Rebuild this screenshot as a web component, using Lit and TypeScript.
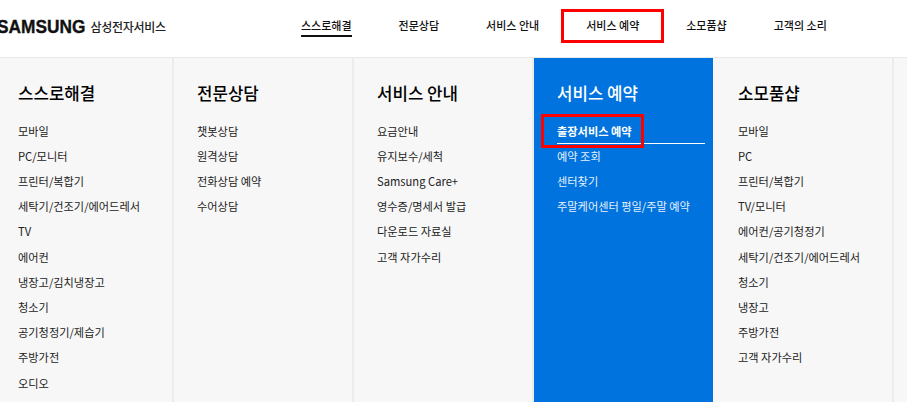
import { LitElement, html, css } from "lit";
import { customElement } from "lit/decorators.js";

const cols: { t: string; items: string[]; active?: boolean }[] = [
  { t: "스스로해결", items: ["모바일", "PC/모니터", "프린터/복합기", "세탁기/건조기/에어드레서", "TV", "에어컨", "냉장고/김치냉장고", "청소기", "공기청정기/제습기", "주방가전", "오디오"] },
  { t: "전문상담", items: ["챗봇상담", "원격상담", "전화상담 예약", "수어상담"] },
  { t: "서비스 안내", items: ["요금안내", "유지보수/세척", "Samsung Care+", "영수증/명세서 발급", "다운로드 자료실", "고객 자가수리"] },
  { t: "서비스 예약", active: true, items: ["출장서비스 예약", "예약 조회", "센터찾기", "주말케어센터 평일/주말 예약"] },
  { t: "소모품샵", items: ["모바일", "PC", "프린터/복합기", "TV/모니터", "에어컨/공기청정기", "세탁기/건조기/에어드레서", "청소기", "냉장고", "주방가전", "고객 자가수리"] },
];
const nav = ["스스로해결", "전문상담", "서비스 안내", "서비스 예약", "소모품샵", "고객의 소리"];

@customElement("app-root")
export class AppRoot extends LitElement {
  static styles = css`
    :host { display: block; width: 907px; height: 402px; overflow: hidden; position: relative; background: #fff; font-family: "Noto Sans CJK KR", "Noto Sans", sans-serif; color: #111; }
    header { height: 57px; display: flex; align-items: center; position: relative; border-bottom: 1px solid #e8e8e8; box-sizing: content-box; }
    .logo { display: flex; align-items: center; margin-left: -3px; width: 304px; flex: none; padding-bottom: 4px; }
    .word { font: 700 18px/20px "Liberation Sans", sans-serif; -webkit-text-stroke: 0.35px #111; color: #111; transform: scaleX(0.96); transform-origin: left; width: 93.5px; flex: none; }
    .svc { font-size: 12px; font-weight: 500; letter-spacing: -0.3px; color: #222; }
    nav { display: flex; gap: 47px; padding-bottom: 3.5px; }
    nav span { font-size: 11px; font-weight: 500; line-height: 16px; padding-bottom: 2.5px; border-bottom: 2px solid transparent; white-space: nowrap; }
    nav span.on { border-bottom-color: #111; }
    .panel { display: flex; height: 344px; background: #f7f7f7; margin-right: 0; }
    .col { background: #f7f7f7; box-sizing: border-box; padding: 23px 0 0 18px; border-right: 2px solid #ececec; flex: none; overflow: hidden; }
    .col.active { background: #0073de; color: #fff; border-right: none; padding-left: 23px; }
    .c0 { width: 174px; }
    .c1 { width: 180px; padding-left: 23px; }
    .c2 { width: 180px; padding-left: 23px; }
    .c3 { width: 179px; }
    .c4 { width: 181px; padding-left: 25px; }
    h2 { margin: 0 0 13.7px; font-size: 16.8px; font-weight: 500; line-height: 24px; white-space: nowrap; color: #000; }
    ul { list-style: none; margin: 0; padding: 0; }
    li { font-size: 11.2px; line-height: 25.2px; height: 25.2px; white-space: nowrap; color: #222; }
    .active li { color: #e6f1fc; }
    .active h2 { color: #fff; }
    .active li.first { color: #fff; font-weight: 700; border-bottom: 1px solid #fff; margin-right: 8px; box-sizing: border-box; }
    .red { position: absolute; border: 3px solid #f00; box-sizing: border-box; pointer-events: none; }
    .r1 { left: 561px; top: 9px; width: 103px; height: 34px; }
    .r2 { left: 541px; top: 114px; width: 103px; height: 34px; }
  `;

  render() {
    return html`
      <header>
        <div class="logo"><span class="word">SAMSUNG</span><span class="svc">삼성전자서비스</span></div>
        <nav>${nav.map((n, i) => html`<span class=${i === 0 ? "on" : ""}>${n}</span>`)}</nav>
      </header>
      <div class="panel">
        ${cols.map((c, i) => html`
          <section class="col c${i} ${c.active ? "active" : ""}">
            <h2>${c.t}</h2>
            <ul>${c.items.map((it, j) => html`<li class=${j === 0 ? "first" : ""}>${it}</li>`)}</ul>
          </section>`)}
      </div>
      <div class="red r1"></div>
      <div class="red r2"></div>
    `;
  }
}
